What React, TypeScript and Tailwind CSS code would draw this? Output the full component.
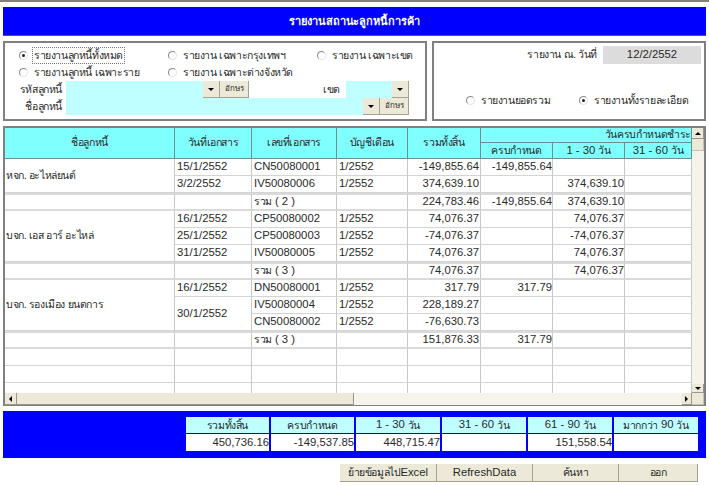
import type { ReactNode } from "react";

type Row = {
  name?: string;
  nameSpan?: number;
  date?: string;
  dateSpan?: number;
  doc: string;
  period?: string;
  total: string;
  due?: string;
  d30?: string;
  count?: number;
  noDate?: boolean;
};

const rows: Row[] = [
  { name: "หจก. อะไหล่ยนต์", nameSpan: 2, date: "15/1/2552", doc: "CN50080001", period: "1/2552", total: "-149,855.64", due: "-149,855.64" },
  { date: "3/2/2552", doc: "IV50080006", period: "1/2552", total: "374,639.10", d30: "374,639.10" },
  { doc: "", total: "224,783.46", due: "-149,855.64", d30: "374,639.10", count: 2 },
  { name: "บจก. เอส อาร์ อะไหล่", nameSpan: 3, date: "16/1/2552", doc: "CP50080002", period: "1/2552", total: "74,076.37", d30: "74,076.37" },
  { date: "25/1/2552", doc: "CP50080003", period: "1/2552", total: "-74,076.37", d30: "-74,076.37" },
  { date: "31/1/2552", doc: "IV50080005", period: "1/2552", total: "74,076.37", d30: "74,076.37" },
  { doc: "", total: "74,076.37", d30: "74,076.37", count: 3 },
  { name: "บจก. รองเมือง ยนตการ", nameSpan: 3, date: "16/1/2552", doc: "DN50080001", period: "1/2552", total: "317.79", due: "317.79" },
  { date: "30/1/2552", dateSpan: 2, doc: "IV50080004", period: "1/2552", total: "228,189.27" },
  { noDate: true, doc: "CN50080002", period: "1/2552", total: "-76,630.73" },
  { doc: "", total: "151,876.33", due: "317.79", count: 3 },
];

const summary = [
  { label: <T>รวมทั้งสิ้น</T>, value: "450,736.16", w: "w-[83px]" },
  { label: <T>ครบกำหนด</T>, value: "-149,537.85", w: "w-[83px]" },
  { label: <>1 - 30 <T>วัน</T></>, value: "448,715.47", w: "w-[84px]" },
  { label: <>31 - 60 <T>วัน</T></>, value: "", w: "w-[84px]" },
  { label: <>61 - 90 <T>วัน</T></>, value: "151,558.54", w: "w-[84px]" },
  { label: <><T>มากกว่า</T> 90 <T>วัน</T></>, value: "", w: "w-[84px]" },
];

// thai runs are narrower than the digits in the original
function T({ children }: { children: ReactNode }) {
  return <span className="text-[10.5px] tracking-[-0.4px]">{children}</span>;
}

function Radio({ checked }: { checked?: boolean }) {
  return (
    <span className="flex h-[9px] w-[9px] shrink-0 items-center justify-center rounded-full border border-t-[#8a8a8a] border-l-[#8a8a8a] border-r-[#e4e4e4] border-b-[#e4e4e4] bg-white">
      {checked && <span className="h-[3px] w-[3px] rounded-full bg-[#222]" />}
    </span>
  );
}

function RadioLabel({ label, checked, focus, className }: { label: string; checked?: boolean; focus?: boolean; className?: string }) {
  return (
    <div className={`flex h-[17px] items-center gap-[4px] ${className ?? ""}`}>
      <Radio checked={checked} />
      <span className={`whitespace-nowrap ${focus ? "border border-dotted border-[#777] px-px py-[2px]" : "px-[2px]"}`}>
        <T>{label}</T>
      </span>
    </div>
  );
}

function DropBtn() {
  return (
    <span className="flex h-[17px] w-[17px] shrink-0 items-center justify-center border-r border-b border-[#a5a294] bg-[#ece9d8]">
      <span className="h-0 w-0 border-x-[3px] border-t-[3px] border-x-transparent border-t-black" />
    </span>
  );
}

function CharBtn() {
  return (
    <span className="flex h-[17px] w-[29px] shrink-0 items-center justify-center border-r border-b border-[#a5a294] bg-[#ece9d8] text-[8px]">
      อักษร
    </span>
  );
}

function ScrollBtn({ dir }: { dir: "up" | "down" | "left" | "right" }) {
  const arrow = {
    up: "border-x-[3px] border-b-[3px] border-x-transparent border-b-black",
    down: "border-x-[3px] border-t-[3px] border-x-transparent border-t-black",
    left: "border-y-[3px] border-r-[3px] border-y-transparent border-r-black",
    right: "border-y-[3px] border-l-[3px] border-y-transparent border-l-black",
  }[dir];
  return (
    <span className="flex h-full w-full items-center justify-center border-r border-b border-[#9a978a] bg-[#ece9d8]">
      <span className={`h-0 w-0 ${arrow}`} />
    </span>
  );
}

export default function App() {
  const cell = "border-r border-b border-r-[#c8c8c8] border-b-[#d4d4d4] px-[2px] whitespace-nowrap overflow-hidden";
  const sumCell = "border-r border-y-2 border-r-[#c8c8c8] border-y-[#dadada] px-[2px] whitespace-nowrap overflow-hidden";
  const head = "border-r border-b border-[#6f8f8f] bg-[#80ffff] font-normal text-center";

  return (
    <div className="h-[485px] w-[709px] overflow-hidden bg-white font-['Liberation_Sans','Noto_Sans',sans-serif] text-[11.3px] leading-none text-[#2a2a2a]">
      <div className="h-[2px] bg-[#808080]" />
      <div className="flex flex-col px-[3px]">
        <div className="mt-[5px] flex h-[29px] items-center justify-center border-b border-[#555] bg-[#0000ff] text-[11px] font-bold tracking-[-0.1px] text-white">
          รายงานสถานะลูกหนี้การค้า
        </div>

        <div className="mt-[5px] flex h-[80px] gap-[5px]">
          <div className="w-[424px] border-2 border-[#808080] pl-[14px] pt-[4px]">
            <div className="flex">
              <RadioLabel className="w-[149px]" label="รายงานลูกหนี้ทั้งหมด" checked focus />
              <RadioLabel className="w-[149px]" label="รายงาน เฉพาะกรุงเทพฯ" />
              <RadioLabel label="รายงาน เฉพาะเขต" />
            </div>
            <div className="flex">
              <RadioLabel className="w-[149px]" label="รายงานลูกหนี้ เฉพาะราย" />
              <RadioLabel label="รายงาน เฉพาะต่างจังหวัด" />
            </div>
            <div className="-ml-[14px] flex h-[17px] items-center">
              <span className="w-[57px] text-right"><T>รหัสลูกหนี้</T></span>
              <span className="ml-[4px] h-full w-[137px] bg-[#bfffff]" />
              <DropBtn />
              <CharBtn />
              <span className="ml-[74px] w-[23px]"><T>เขต</T></span>
              <span className="h-full w-[46px] bg-[#bfffff]" />
              <DropBtn />
            </div>
            <div className="-ml-[14px] flex h-[17px] items-center">
              <span className="w-[57px] text-right"><T>ชื่อลูกหนี้</T></span>
              <span className="ml-[4px] h-full w-[297px] bg-[#bfffff]" />
              <DropBtn />
              <CharBtn />
            </div>
          </div>

          <div className="flex flex-1 flex-col border-2 border-[#808080]">
            <div className="mt-[3px] flex h-[18px] items-center justify-end pr-[3px]">
              <span className="mr-[6px]"><T>รายงาน ณ. วันที่</T></span>
              <span className="flex h-full w-[98px] items-center justify-center bg-[#dcdcdc]">12/2/2552</span>
            </div>
            <div className="mt-[28px] flex pl-[32px]">
              <RadioLabel className="w-[113px]" label="รายงานยอดรวม" />
              <RadioLabel label="รายงานทั้งรายละเอียด" checked />
            </div>
          </div>
        </div>

        <div className="mt-[5px] flex h-[280px] flex-col border-x-2 border-t-2 border-b border-[#808080]">
          <div className="flex h-[265px] min-h-0">
            <div className="min-w-0 flex-1 overflow-hidden">
              <table className="w-[687px] table-fixed border-separate border-spacing-0">
                <colgroup>
                  <col className="w-[170px]" />
                  <col className="w-[77px]" />
                  <col className="w-[85px]" />
                  <col className="w-[71px]" />
                  <col className="w-[73px]" />
                  <col className="w-[72px]" />
                  <col className="w-[72px]" />
                  <col className="w-[67px]" />
                </colgroup>
                <thead>
                  <tr className="h-[15px]">
                    <th rowSpan={2} className={head}><T>ชื่อลูกหนี้</T></th>
                    <th rowSpan={2} className={head}><T>วันที่เอกสาร</T></th>
                    <th rowSpan={2} className={head}><T>เลขที่เอกสาร</T></th>
                    <th rowSpan={2} className={head}><T>บัญชีเดือน</T></th>
                    <th rowSpan={2} className={head}><T>รวมทั้งสิ้น</T></th>
                    <th colSpan={3} className={`${head} whitespace-nowrap !text-right`}><T>วันครบกำหนดชำระ</T></th>
                  </tr>
                  <tr className="h-[16px]">
                    <th className={head}><T>ครบกำหนด</T></th>
                    <th className={head}>1 - 30 <T>วัน</T></th>
                    <th className={head}>31 - 60 <T>วัน</T></th>
                  </tr>
                </thead>
                <tbody>
                  {rows.map((r, i) => {
                    const sum = r.count !== undefined;
                    const c = sum ? sumCell : cell;
                    return (
                      <tr key={i} className={sum ? "h-[18px]" : "h-[17px]"}>
                        {sum && <td className={c} />}
                        {r.name && (
                          <td rowSpan={r.nameSpan} className={`${c} !pl-px`}>
                            <T>{r.name}</T>
                          </td>
                        )}
                        {sum && <td className={c} />}
                        {!sum && !r.noDate && (
                          <td rowSpan={r.dateSpan} className={c}>
                            {r.date}
                          </td>
                        )}
                        <td className={c}>
                          {sum ? <><T>รวม</T> ( {r.count} )</> : r.doc}
                        </td>
                        <td className={c}>{r.period}</td>
                        <td className={`${c} !pr-px text-right`}>{r.total}</td>
                        <td className={`${c} !pr-0 text-right`}>{r.due}</td>
                        <td className={`${c} !pr-0 text-right`}>{r.d30}</td>
                        <td className={c} />
                      </tr>
                    );
                  })}
                  {[0, 1, 2].map((n) => (
                    <tr key={n} className="h-[17px]">
                      {Array.from({ length: 8 }).map((_, c) => (
                        <td key={c} className={cell} />
                      ))}
                    </tr>
                  ))}
                </tbody>
              </table>
            </div>

            <div className="flex w-[12px] shrink-0 flex-col bg-[#f5f3ea]">
              <div className="h-[11px]"><ScrollBtn dir="up" /></div>
              <div className="h-[12px] border-r border-b border-[#c5c2b2] bg-[#ece9d8]" />
              <div className="flex-1" />
              <div className="h-[9px]"><ScrollBtn dir="down" /></div>
            </div>
          </div>

          <div className="flex h-[12px] shrink-0 bg-[#f5f3ea]">
            <div className="w-[12px]"><ScrollBtn dir="left" /></div>
            <div className="w-[337px] border-r border-b border-[#9a978a] bg-[#ece9d8]" />
            <div className="flex-1" />
            <div className="w-[10px]"><ScrollBtn dir="right" /></div>
            <div className="w-[12px] border-r border-b border-[#c5c2b2] bg-[#ece9d8]" />
          </div>
        </div>

        <div className="mt-[5px] flex h-[47px] justify-end gap-[2px] bg-[#0000ff] pr-[8px] pt-[6px]">
          {summary.map((s, i) => (
            <div key={i} className={`${s.w} flex h-[34px] flex-col gap-px`}>
              <div className="flex h-[16px] items-center justify-center gap-[3px] bg-[#bfffff] whitespace-nowrap">{s.label}</div>
              <div className="flex h-[17px] items-center justify-end bg-white">{s.value}</div>
            </div>
          ))}
        </div>

        <div className="mt-[6px] flex h-[18px] justify-end pr-[8px]">
          {[
            { t: <><T>ย้ายข้อมูลไป</T>Excel</>, w: "w-[97px]" },
            { t: "RefreshData", w: "w-[96px]" },
            { t: <T>ค้นหา</T>, w: "w-[86px]" },
            { t: <T>ออก</T>, w: "w-[79px]" },
          ].map((b, i) => (
            <button key={i} className={`${b.w} border-r border-b border-[#a5a294] bg-[#ece9d8] text-[#2a2a2a]`}>
              {b.t}
            </button>
          ))}
        </div>
      </div>
    </div>
  );
}
